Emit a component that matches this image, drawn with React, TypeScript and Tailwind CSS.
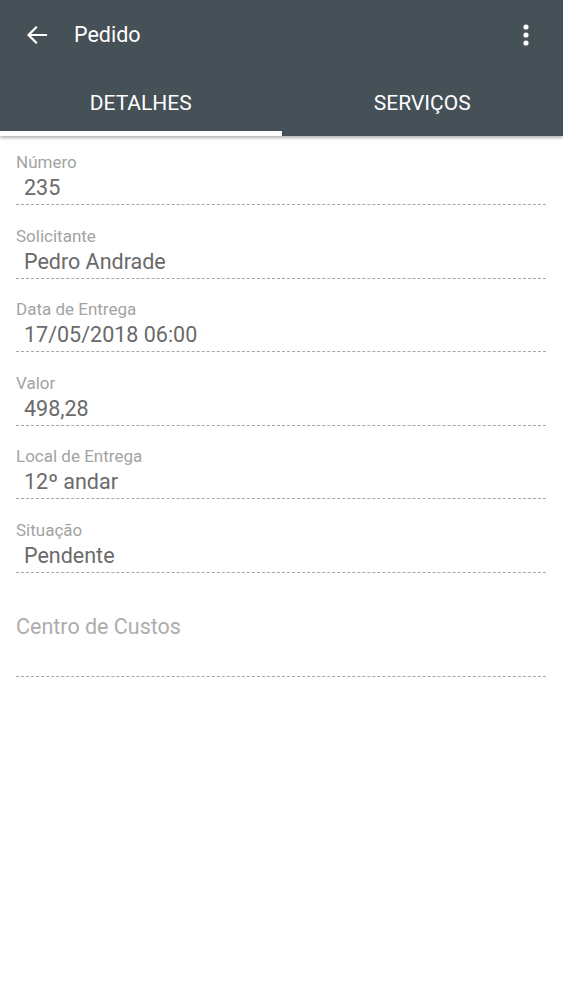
import React from "react";

const fields = [
  { label: "Número", value: "235" },
  { label: "Solicitante", value: "Pedro Andrade" },
  { label: "Data de Entrega", value: "17/05/2018 06:00" },
  { label: "Valor", value: "498,28" },
  { label: "Local de Entrega", value: "12º andar" },
  { label: "Situação", value: "Pendente" },
];

export default function App() {
  return (
    <div className="w-[563px] h-[1000px] bg-white font-['Roboto',sans-serif] overflow-hidden">
      <div className="bg-[#465057] shadow-[0_2px_3px_rgba(0,0,0,0.3)] relative">
        <div className="h-[68px] flex items-center pt-[2px]">
          <div className="w-[74px] flex items-center pl-[25px]">
            <svg width="24" height="24" viewBox="0 0 24 24" fill="none" stroke="white" strokeWidth="2.2" strokeLinecap="square">
              <path d="M21 12H4M11 4.5L3.5 12L11 19.5" />
            </svg>
          </div>
          <div className="text-white text-[21.5px] leading-none flex-1">Pedido</div>
          <div className="w-[60px] flex items-center justify-start pl-[20px]">
            <svg width="6" height="24" viewBox="0 0 6 24" fill="white">
              <circle cx="3" cy="4" r="2.6" />
              <circle cx="3" cy="12" r="2.6" />
              <circle cx="3" cy="20" r="2.6" />
            </svg>
          </div>
        </div>
        <div className="h-[68px] flex">
          <div className="flex-1 flex flex-col">
            <div className="flex-1 flex items-center justify-center text-white text-[21px] pt-[8px]">DETALHES</div>
            <div className="h-[5px] bg-white" />
          </div>
          <div className="flex-1 flex flex-col">
            <div className="flex-1 flex items-center justify-center text-white text-[21px] pt-[8px]">SERVIÇOS</div>
            <div className="h-[5px]" />
          </div>
        </div>
      </div>
      <div className="px-[16px] pt-[17px] pr-[17px] flex flex-col gap-[21.5px]">
        {fields.map((f) => (
          <div key={f.label} className="flex flex-col">
            <div className="h-[18px] leading-[18px] text-[17px] text-[#a3a3a3]">{f.label}</div>
            <div className="h-[24px] leading-[24px] mt-[5px] pl-[8px] text-[21.5px] text-[#6a6a6a]">{f.value}</div>
            <div className="mt-[4px] border-b border-dashed border-[#a8a8a8]" />
          </div>
        ))}
        <div className="flex flex-col pt-[21px]">
          <div className="h-[24px] leading-[24px] text-[21.5px] text-[#adadad]">Centro de Custos</div>
          <div className="mt-[37px] border-b border-dashed border-[#a8a8a8]" />
        </div>
      </div>
    </div>
  );
}
